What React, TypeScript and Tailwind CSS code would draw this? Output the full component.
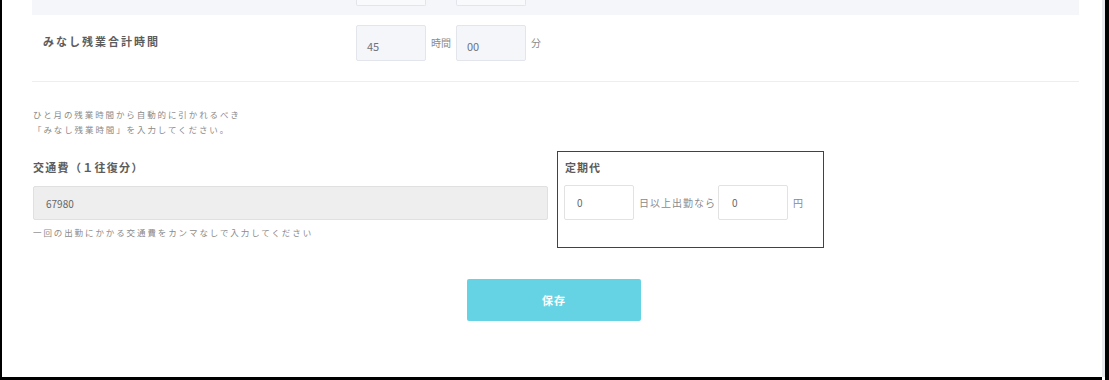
const jp = { fontFamily: '"Noto Sans CJK JP", "Noto Sans", sans-serif' };

function TimeBox({ value, className = "" }: { value: string; className?: string }) {
  return (
    <div
      className={
        "w-[70px] h-[36px] bg-[#f5f6fa] border border-[#e2e5ec] rounded-[2px] flex items-center pl-[10px] pt-[6px] text-[11px] text-[#6b7280] " +
        className
      }
    >
      {value}
    </div>
  );
}

export default function App() {
  return (
    <div className="w-[1109px] h-[380px] flex bg-white overflow-hidden" style={jp}>
      <div className="w-[2px] bg-black shrink-0" />
      <div className="flex-1 flex flex-col">
        <main className="flex-1 pl-[30px] pr-[23px] flex flex-col">
          {/* previous row, scrolled off */}
          <div className="h-[15px] bg-[#f5f6fa] flex items-start pl-[324px] gap-[30px]">
            <div className="w-[70px] h-[6px] border-x border-b border-[#e2e5ec] bg-[#f9fafc] rounded-b-[2px]" />
            <div className="w-[70px] h-[6px] border-x border-b border-[#e2e5ec] bg-[#f9fafc] rounded-b-[2px]" />
          </div>

          {/* みなし残業 row */}
          <div className="h-[67px] flex items-start pt-[10px] border-b border-[#eceef2]">
            <div className="w-[324px] pl-[11px] pt-[7px] text-[11px] font-bold tracking-[2px] text-[#5c5c5c] leading-[18px]">
              みなし残業合計時間
            </div>
            <TimeBox value="45" />
            <span className="ml-[5px] mt-[11px] text-[10px] text-[#8a8a8a] leading-[14px]">時間</span>
            <TimeBox value="00" className="ml-[5px]" />
            <span className="ml-[5px] mt-[11px] text-[10px] text-[#8a8a8a] leading-[14px]">分</span>
          </div>

          <div className="mt-[25px] pl-[1px] text-[8.5px] tracking-[1.9px] leading-[15px] text-[#8a8a8a]">
            <p>ひと月の残業時間から自動的に引かれるべき</p>
            <p>「みなし残業時間」を入力してください。</p>
          </div>

          <div className="mt-[14px] flex items-start gap-[9px]">
            <div className="w-[516px] pl-[1px] pt-[7px]">
              <div className="text-[11px] font-bold tracking-[1.3px] leading-[18px] text-[#5c5c5c]">
                交通費（１往復分）
              </div>
              <div className="mt-[10px] h-[34px] bg-[#eeeeee] border border-[#e0e0e0] rounded-[2px] flex items-center pl-[12px] text-[10px] text-[#666]">
                67980
              </div>
              <p className="mt-[5px] text-[8.5px] tracking-[1.9px] leading-[14px] text-[#8a8a8a]">
                一回の出勤にかかる交通費をカンマなしで入力してください
              </p>
            </div>

            <div className="w-[267px] h-[97px] border border-[#dd0000] pl-[6px] pt-[6px]">
              <div className="pl-[1px] text-[11px] font-bold tracking-[1px] leading-[18px] text-[#5c5c5c]">
                定期代
              </div>
              <div className="mt-[9px] flex items-center">
                <div className="w-[70px] h-[35px] bg-white border border-[#e2e2e2] rounded-[2px] flex items-center pl-[12px] text-[10px] text-[#666]">
                  0
                </div>
                <span className="ml-[5px] text-[10px] tracking-[1px] text-[#8a8a8a]">日以上出勤なら</span>
                <div className="ml-[2px] w-[70px] h-[35px] bg-white border border-[#e2e2e2] rounded-[2px] flex items-center pl-[13px] text-[10px] text-[#666]">
                  0
                </div>
                <span className="ml-[5px] text-[10px] text-[#8a8a8a]">円</span>
              </div>
            </div>
          </div>

          <div className="mt-[31px] flex pl-[435px]">
            <button className="w-[174px] h-[42px] bg-[#66d3e4] rounded-[2px] text-white text-[11px] font-bold tracking-[1px]">
              保存
            </button>
          </div>
        </main>
        <div className="h-[3px] bg-black" />
      </div>
      <div className="w-[3px] bg-[#e6e8eb] shrink-0 mb-[3px]" />
      <div className="w-[4px] bg-black shrink-0" />
    </div>
  );
}
